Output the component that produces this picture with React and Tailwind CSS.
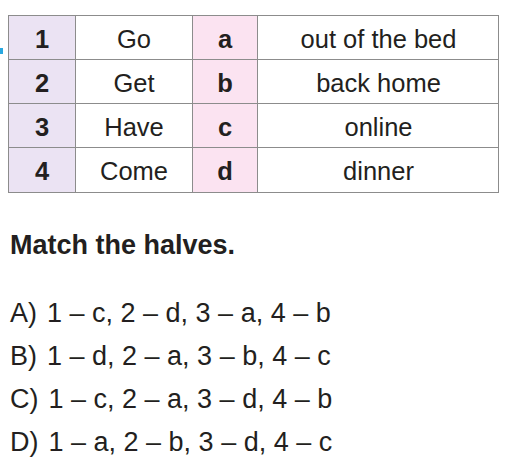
const rows = [
  ["1", "Go", "a", "out of the bed"],
  ["2", "Get", "b", "back home"],
  ["3", "Have", "c", "online"],
  ["4", "Come", "d", "dinner"],
];

const options = [
  ["A)", "1 – c, 2 – d, 3 – a, 4 – b"],
  ["B)", "1 – d, 2 – a, 3 – b, 4 – c"],
  ["C)", "1 – c, 2 – a, 3 – d, 4 – b"],
  ["D)", "1 – a, 2 – b, 3 – d, 4 – c"],
];

const cell = "h-[44px] flex items-center justify-center pt-[3px] text-[25.5px] border-[#8c8c8c]";

export default function App() {
  return (
    <div className="w-[509px] h-[476px] bg-white text-[#231f20] relative overflow-hidden" style={{ fontFamily: '"Liberation Sans", Arial, sans-serif' }}>
      <div className="absolute left-0 top-[48px] w-[3px] h-[6px] bg-[#29a8e0]" />
      <div className="pt-[15px] pl-[8px]">
        <div className="grid grid-cols-[67px_117px_65px_241px] w-[491px] border border-[#8c8c8c]">
          {rows.map((r, i) => (
            <div key={i} className="contents">
              <div className={`${cell} bg-[#ebe3f3] font-bold border-r ${i < 3 ? "border-b" : ""}`}>{r[0]}</div>
              <div className={`${cell} border-r ${i < 3 ? "border-b" : ""}`}>{r[1]}</div>
              <div className={`${cell} bg-[#fbe3f1] font-bold border-r ${i < 3 ? "border-b" : ""}`}>{r[2]}</div>
              <div className={`${cell} ${i < 3 ? "border-b" : ""}`}>{r[3]}</div>
            </div>
          ))}
        </div>
      </div>
      <div className="pl-[10px] mt-[37px] font-bold text-[27px] leading-[30px]">Match the halves.</div>
      <div className="pl-[10px] mt-[38px] flex flex-col gap-[12px]">
        {options.map((o) => (
          <div key={o[0]} className="text-[27px] leading-[31px] flex gap-[10px]">
            <span>{o[0]}</span>
            <span>{o[1]}</span>
          </div>
        ))}
      </div>
    </div>
  );
}
